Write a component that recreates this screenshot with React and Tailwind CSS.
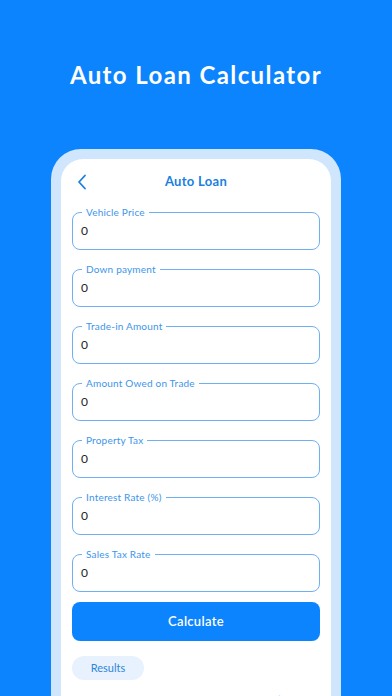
import React from "react";

const fields = [
  "Vehicle Price",
  "Down payment",
  "Trade-in Amount",
  "Amount Owed on Trade",
  "Property Tax",
  "Interest Rate (%)",
  "Sales Tax Rate",
];

function Field({ label }) {
  return (
    <div className="relative h-[38px] rounded-[8px] border border-[#6eb0f2] flex items-center pl-[8px]">
      <span className="absolute left-[9px] top-[-7px] bg-white px-[4px] text-[10px] leading-[12px] tracking-[0.2px] text-[#3d95ea]">
        {label}
      </span>
      <span className="text-[12px] text-[#222]">0</span>
    </div>
  );
}

export default function App() {
  return (
    <div
      className="w-[392px] h-[696px] overflow-hidden bg-[#0b84fe] flex flex-col items-center"
      style={{ fontFamily: "Lato, 'Noto Sans', sans-serif" }}
    >
      <h1 className="mt-[59px] text-[24px] leading-[32px] font-bold text-white tracking-[1.4px]">
        Auto Loan Calculator
      </h1>
      <div className="mt-[58px] w-[290px] rounded-t-[30px] bg-[#cfe6fd] px-[10px] pt-[10px] flex-1">
        <div className="h-full rounded-t-[22px] bg-white px-[11px] pt-[11px]">
          <div className="relative h-[24px] flex items-center justify-center">
            <svg
              className="absolute left-[5px] top-[4px]"
              width="10"
              height="16"
              viewBox="0 0 10 16"
              fill="none"
              stroke="#1a7fe0"
              strokeWidth="1.8"
              strokeLinecap="round"
              strokeLinejoin="round"
            >
              <path d="M8 1.5 L2 8 L8 14.5" />
            </svg>
            <span className="text-[13px] font-bold tracking-[0.3px] text-[#1a7fe0]">Auto Loan</span>
          </div>
          <div className="mt-[18px] flex flex-col gap-[19px]">
            {fields.map((f) => (
              <Field key={f} label={f} />
            ))}
          </div>
          <button className="mt-[10px] w-full h-[39px] rounded-[8px] bg-[#0b84fe] text-white text-[13px] font-semibold tracking-[0.3px]">
            Calculate
          </button>
          <div className="mt-[15px] w-[72px] h-[24px] rounded-full bg-[#e7f2fe] flex items-center justify-center text-[11px] text-[#2f86d8]">
            Results
          </div>
          <div className="mt-[12px] flex justify-between text-[12px]">
            <span className="text-[#222]">Monthly Payment</span>
            <span className="text-[#1d9bd8]">$154.00</span>
          </div>
        </div>
      </div>
    </div>
  );
}
